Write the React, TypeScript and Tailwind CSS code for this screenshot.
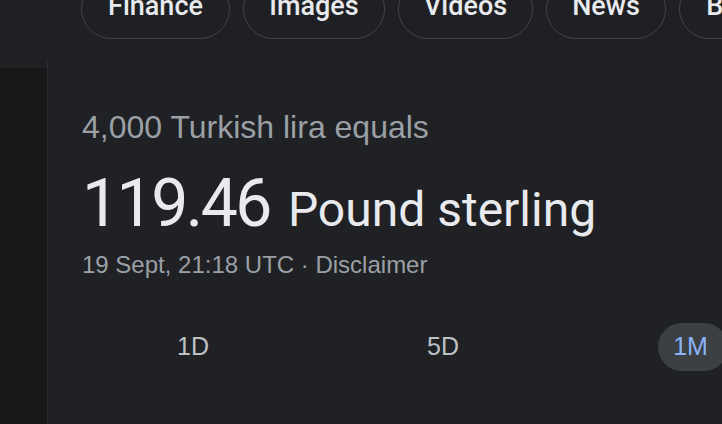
export default function App() {
  const chips = [
    { t: "Finance", w: 149 },
    { t: "Images", w: 142 },
    { t: "Videos", w: 135 },
    { t: "News", w: 120 },
    { t: "Books", w: 130 },
  ];
  return (
    <div className="w-[722px] h-[424px] overflow-hidden bg-[#1f2023] flex flex-col" style={{ fontFamily: "Roboto, 'Liberation Sans', sans-serif" }}>
      <div className="h-[60px] shrink-0 flex gap-[13px] pl-[81px] items-end pb-[21px]">
        {chips.map((c) => (
          <div key={c.t} className="shrink-0 h-[60px] rounded-full border border-[#414347] flex items-end justify-center text-[#e8eaed] text-[27px] leading-[30px] font-medium pb-[17px]" style={{ width: c.w }}>
            {c.t}
          </div>
        ))}
      </div>
      <div className="flex flex-1">
        <div className="w-[47px] shrink-0 mt-[8px] bg-[#171717]" />
        <div className="flex-1 bg-[#202124] border-l border-[#2a2b2e] pl-[34px] pt-[48px]">
          <div className="text-[32px] leading-[38px] text-[#9aa0a6]" style={{ fontFamily: "'Liberation Sans', Arial, sans-serif" }}>4,000 Turkish lira equals</div>
          <div className="flex items-baseline gap-[18px] mt-[22px] text-[#e8eaed]">
            <span className="text-[66px] leading-[72px] tracking-[-2.5px]">119.46</span>
            <span className="text-[48px] leading-[56px]">Pound sterling</span>
          </div>
          <div className="text-[24px] leading-[30px] text-[#9aa0a6] mt-[10px]" style={{ fontFamily: "'Liberation Sans', Arial, sans-serif" }}>19 Sept, 21:18 UTC · Disclaimer</div>
          <div className="flex mt-[43px] -ml-[14px]" style={{ fontFamily: "'Liberation Sans', Arial, sans-serif" }}>
            <div className="w-[250px] shrink-0 flex justify-center"><div className="h-[48px] px-[16px] flex items-center text-[25px] text-[#bdc1c6]">1D</div></div>
            <div className="w-[250px] shrink-0 flex justify-center"><div className="h-[48px] px-[16px] flex items-center text-[25px] text-[#bdc1c6]">5D</div></div>
            <div className="w-[250px] shrink-0 flex justify-center"><div className="h-[48px] pl-[15px] pr-[20px] -ml-[0px] rounded-full bg-[#3c4043] flex items-center text-[25px] text-[#8ab4f8]">1M</div></div>
          </div>
        </div>
      </div>
    </div>
  );
}
